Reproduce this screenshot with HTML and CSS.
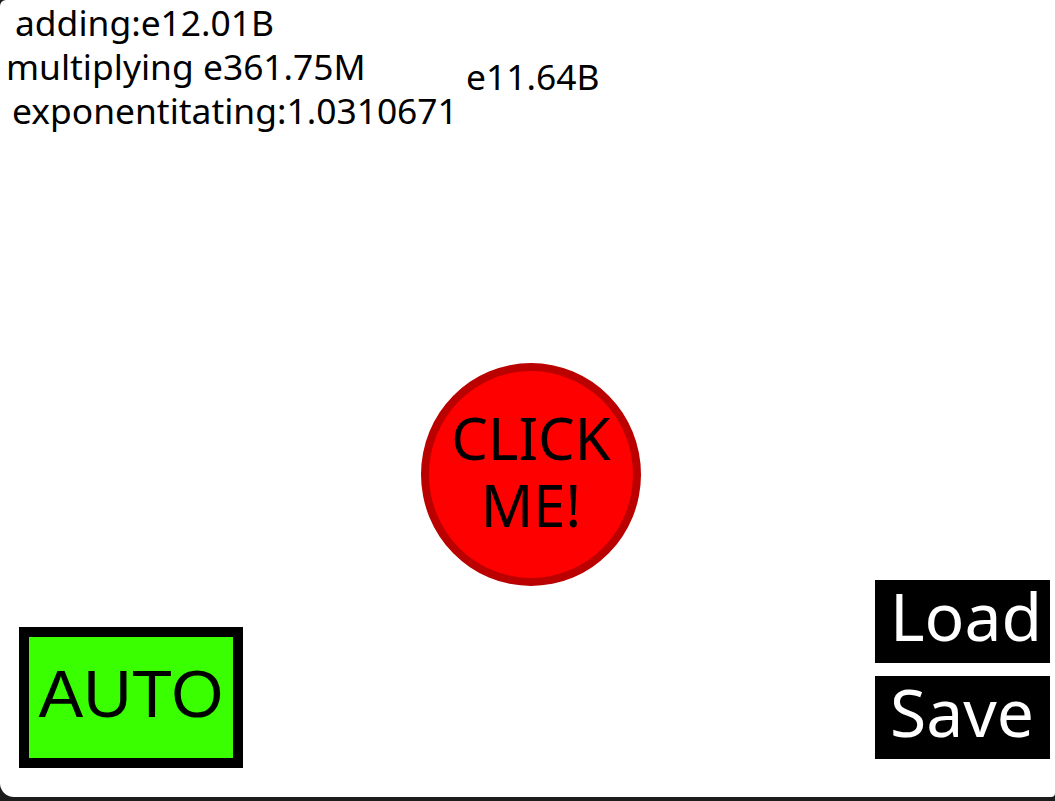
FILE: index.html
```html
<!DOCTYPE html>
<html lang="en">
<head>
    <meta charset="UTF-8">
    <meta name="viewport" content="width=device-width, initial-scale=1.0">
    <title>Clicker</title>

    <link rel="stylesheet" href="styles.css">
</head>
<body>

    <div id="game">
        <div class="top">
            <div class="stats">
                <div class="stat stat_add">adding:<span id="add">e12.01B</span></div>
                <div class="stat stat_mul">multiplying <span id="mul">e361.75M</span></div>
                <div class="stat stat_exp">exponentitating:<span id="exp">1.0310671</span></div>
            </div>
            <div id="points">e11.64B</div>
        </div>

        <div class="middle">
            <button id="click" class="click_btn">CLICK<br>ME!</button>
        </div>

        <div class="bottom">
            <button id="auto" class="auto_btn">AUTO</button>
            <div class="storage">
                <button class="store_btn">Load</button>
                <button class="store_btn">Save</button>
            </div>
        </div>
    </div>

</body>
</html>
```

FILE: styles.css
```css
html, body {
    margin: 0;
    height: 100%;
    background: #1c1c1c;
}

#game {
    height: 797px;
    background: #fff;
    border-radius: 6px 0 4px 14px;
    display: flex;
    flex-direction: column;
    font-family: "Noto Sans", "Open Sans", sans-serif;
    color: #000;
}

button {
    border: none;
    padding: 0;
    margin: 0;
    cursor: pointer;
}

.top {
    display: flex;
    height: 132px;
    flex: none;
}

.stats {
    width: 466px;
}

.stat {
    font-size: 35.4px;
    line-height: 44px;
    white-space: nowrap;
}

.stat_add {
    margin-left: 15px;
}

.stat_mul {
    margin-left: 6px;
}

.stat_exp {
    margin-left: 12px;
}

#points {
    font-size: 35.4px;
    line-height: 44px;
    margin-top: 54px;
}

.middle {
    flex: none;
    display: flex;
    justify-content: center;
    padding: 231px 0 0 7px;
    margin-bottom: -12px;
}

.click_btn {
    width: 220px;
    height: 223px;
    border-radius: 50%;
    border: 8px solid #bb0000;
    background: #ff0000;
    color: #000;
    font-family: "Noto Sans", "Open Sans", sans-serif;
    font-size: 58px;
    line-height: 67px;
    padding-bottom: 8px;
}

.bottom {
    flex: none;
    margin-top: auto;
    display: flex;
    justify-content: space-between;
    align-items: flex-end;
    padding: 0 5px 29px 19px;
}

.auto_btn {
    width: 224px;
    height: 141px;
    border: 10px solid #000;
    background: #3aff00;
    color: #000;
    font-family: "Liberation Sans", Arial, sans-serif;
    font-size: 67px;
    line-height: 70px;
    padding-bottom: 8px;
}

.storage {
    display: flex;
    flex-direction: column;
    gap: 13px;
    margin-bottom: 9px;
}

.store_btn {
    width: 175px;
    height: 83px;
    background: #000;
    color: #fff;
    font-family: "Noto Sans", "Open Sans", sans-serif;
    font-size: 66px;
    line-height: 71px;
    text-align: left;
    padding: 0 0 12px 15px;
}
```
